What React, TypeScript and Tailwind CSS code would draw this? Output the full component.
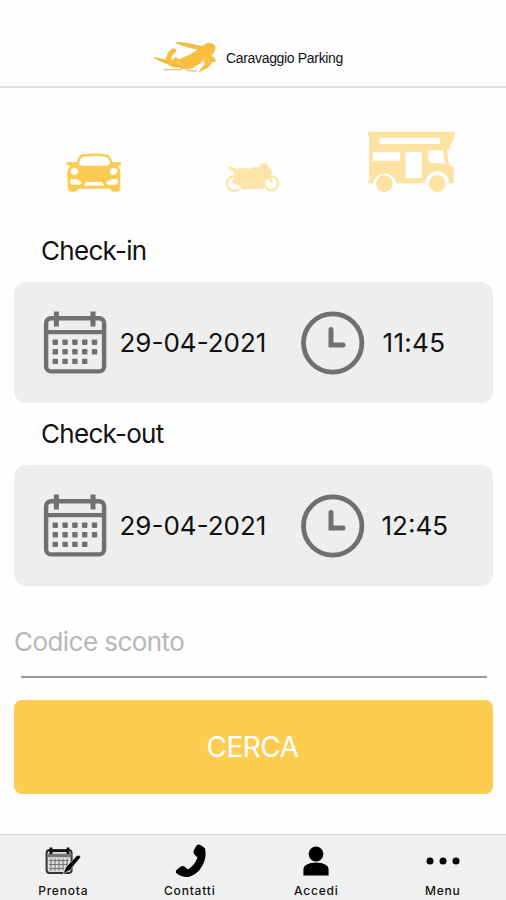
import { useState } from 'react'
import type { ReactNode } from 'react'

type Vehicle = 'car' | 'moto' | 'camper'

interface SlotProps {
    label: string
    date: string
    time: string
    labelClass: string
    timeClass: string
}

function Logo() {
    return (
        <svg viewBox="24 16 198 100" className="w-[66px] h-[33px]" fill="none">
            <path
                d="M94 25 C112 21 145 30 172 36 C184 24 203 22 210 34 C214 45 207 54 198 64 C204 65 210 72 213 80 L201 82 C198 94 188 100 177 105 L164 112 C168 102 176 96 181 89 L178 76 C166 89 153 93 139 101 C125 106 110 103 101 97 C89 101 77 97 68 88 C60 86 48 81 40 77 L27 70 L45 73 L63 77 C65 60 72 46 84 43 C95 41 96 51 84 59 C76 65 76 73 81 79 L91 69 L102 76 L112 71 C131 65 149 54 160 43 C140 42 116 34 94 25 Z"
                fill="#f8bd3e"
                stroke="#f3c050"
                strokeWidth="3"
                strokeLinejoin="round"
            />
            <path d="M92 24 C118 24 139 32 171 38 M27 69 C39 77 55 78 68 84 M91 88 L109 102" stroke="#e5b552" strokeWidth="2.6" strokeLinecap="round" />
            <path d="M58 106 L108 106 M125 108 L154 110" stroke="#dcc384" strokeWidth="4" strokeLinecap="round" />
            <path d="M92 85 L103 82 L109 91 M166 82 L179 76 M183 71 L193 76 L188 86" stroke="#fbe2a6" strokeWidth="2" />
        </svg>
    )
}

function CarIcon() {
    return (
        <svg viewBox="48 96 168 120" className="w-14 h-10" fill="#fccb52">
            <path
                fillRule="evenodd"
                d="M81 124 C84 109 88 102 97 100 Q133 95 169 100 C178 102 182 109 188 124 L211 123 Q215 124 213 131 L204 135 C211 142 212 153 211 164 L211 205 Q210 212 203 212 L188 212 Q182 211 181 203 L84 203 Q83 211 76 212 L61 212 Q54 211 54 204 L52 164 C51 152 53 143 61 136 L50 131 Q48 124 54 123 Z M87 129 Q92 134 98 134 L170 134 Q177 133 181 127 C177 113 175 109 165 107 Q133 103 101 107 C92 109 90 116 87 129 Z M73 140 a11 11 0 1 0 0.1 0 Z M191 140 a11 11 0 1 0 0.1 0 Z M61 174 Q59 190 66 191 L88 191 Q94 190 94 183 Q85 173 61 174 Z M203 174 Q205 190 198 191 L176 191 Q169 190 169 183 Q179 173 203 174 Z M108 183 L102 194 L163 194 L156 183 Z"
            />
        </svg>
    )
}

function MotoIcon() {
    return (
        <svg viewBox="34 36 163 93" className="w-[54px] h-[31px]">
            <path
                d="M38 54 L48 49 L64 56 L91 54 L103 57 Q111 51 122 52 L137 50 L139 41 L157 40 L161 51 L169 56 L174 69 L164 79 L151 92 L147 117 L82 118 L74 106 L50 98 L61 78 L56 66 Z"
                fill="#fde4a8"
            />
            <g fill="none" stroke="#fde4a8" strokeWidth="8">
                <path d="M74 117 A22 22 0 1 1 67 80" />
                <circle cx="170" cy="100" r="21" />
                <path d="M160 72 L173 98" />
            </g>
        </svg>
    )
}

function CamperIcon() {
    return (
        <svg viewBox="38 34 266 186" className="w-[89px] h-[62px] relative right-[2px]" fill="#fde2a1">
            <path
                fillRule="evenodd"
                d="M40 36 L302 36 L298 59 Q294 69 287 76 L286 88 L277 89 L283 132 Q286 139 298 143 L298 191 L284 191 A36 36 0 0 0 212 191 L126 191 A36 36 0 0 0 60 180 L55 191 L40 191 L40 185 L44 182 L44 48 L40 45 Z M75 54 V73 H257 V54 Z M55 98 V123 H137 V98 Z M153 96 V175 H202 V96 Z M222 92 V124 Q222 129 228 129 L272 132 L266 92 Z"
            />
            <circle cx="90" cy="192" r="25" />
            <circle cx="248" cy="192" r="25" />
        </svg>
    )
}

function CalendarIcon() {
    const rows = [
        { y: 28.5, xs: [9.6, 19.4, 29.2, 39, 48.8] },
        { y: 38.1, xs: [9.6, 19.4, 29.2, 39, 48.8] },
        { y: 47.7, xs: [9.6, 19.4, 29.2, 39] }
    ]
    return (
        <svg viewBox="0 0 64 64" className="w-16 h-16 shrink-0" fill="none" stroke="#707070">
            <rect x="3.1" y="7.2" width="58" height="53.2" rx="5" strokeWidth="4.4" />
            <path d="M3 21.2 H61" strokeWidth="4.2" />
            <path d="M13.4 0.5 V15.5 M50 0.5 V15.5" strokeWidth="5" />
            <g fill="#707070" stroke="none">
                {rows.map((row) => row.xs.map((x) => <rect key={`${row.y}-${x}`} x={x} y={row.y} width="5.4" height="5.4" rx="0.8" />))}
            </g>
        </svg>
    )
}

function ClockIcon() {
    return (
        <svg viewBox="0 0 64 64" className="w-16 h-16 shrink-0" fill="none" stroke="#707070">
            <circle cx="31.7" cy="32" r="29.2" strokeWidth="4.8" />
            <path d="M30 18.5 V34 H42" strokeWidth="5" strokeLinecap="round" />
        </svg>
    )
}

function PrenotaIcon() {
    return (
        <svg viewBox="0 0 36 28" className="w-9 h-7" fill="none" stroke="#333">
            <rect x="1.6" y="3" width="25" height="23" rx="3" strokeWidth="2" fill="#dcdcdc" />
            <path d="M2 8.5 H26.5" stroke="#777" strokeWidth="3.4" />
            <path d="M4 4 H24" stroke="#111" strokeWidth="2" />
            <path d="M6 0.5 V7 M23 0.5 V7" stroke="#111" strokeWidth="2.8" />
            <path d="M4 13.5 H24 M4 17.5 H23 M4 21.5 H19 M6 11.5 V24 M10 11.5 V24 M14 11.5 V24 M18 11.5 V23 M22 11.5 V19" stroke="#777" strokeWidth="1.1" />
            <path d="M18 27 L21 20 L32 8.5 Q35.5 7.5 35.5 10.5 L25 23 Z" fill="#000" stroke="#efefef" strokeWidth="0.6" />
        </svg>
    )
}

function PhoneIcon() {
    return (
        <svg viewBox="0 0 32 34" className="w-8 h-[34px] relative left-px" fill="#000">
            <path d="M21.5 1.6 Q23.5 0 25.5 1 L30 4.3 Q32 13 27.5 21.5 Q22.5 30.5 13.5 33 Q6.5 33.5 1.2 29 Q0.2 27.5 1.5 26 L5.8 22.6 Q8 21.3 10 23 L13 25.4 Q19.8 21.2 22.5 13.5 L19 10 Q17.8 8 19 6 Z" />
        </svg>
    )
}

function UserIcon() {
    return (
        <svg viewBox="0 0 26 30" className="w-[26px] h-[30px]" fill="#000">
            <circle cx="13" cy="8" r="7.4" />
            <path d="M0.4 29.5 V23 Q1 17 13 16.5 Q25 17 25.6 23 V29.5 Z" />
        </svg>
    )
}

function DotsIcon() {
    return (
        <svg viewBox="0 0 34 8" className="w-[34px] h-2" fill="#000">
            <circle cx="4" cy="4" r="3.5" />
            <circle cx="17" cy="4" r="3.5" />
            <circle cx="30" cy="4" r="3.5" />
        </svg>
    )
}

function Slot({ label, date, time, labelClass, timeClass }: SlotProps) {
    return (
        <section>
            <h2 className={`pl-[27px] pt-[15px] text-[26px] leading-8 tracking-[-0.7px] ${labelClass}`}>{label}</h2>
            <div className="h-[121px] rounded-xl bg-[#eeeeee] flex items-center pl-[29px]">
                <button className="flex w-[257.5px] items-center gap-[12.5px]">
                    <CalendarIcon />
                    <span className="text-[26px] whitespace-nowrap">{date}</span>
                </button>
                <button className="flex items-center">
                    <ClockIcon />
                    <span className={`text-[26px] whitespace-nowrap ${timeClass}`}>{time}</span>
                </button>
            </div>
        </section>
    )
}

const vehicles: { id: Vehicle; label: string; icon: ReactNode }[] = [
    { id: 'car', label: 'Auto', icon: <CarIcon /> },
    { id: 'moto', label: 'Moto', icon: <MotoIcon /> },
    { id: 'camper', label: 'Camper', icon: <CamperIcon /> }
]

const tabs: { label: string; icon: ReactNode }[] = [
    { label: 'Prenota', icon: <PrenotaIcon /> },
    { label: 'Contatti', icon: <PhoneIcon /> },
    { label: 'Accedi', icon: <UserIcon /> },
    { label: 'Menu', icon: <DotsIcon /> }
]

export default function App() {
    const [, setVehicle] = useState<Vehicle>('car')
    const [code, setCode] = useState('')

    return (
        <div className="w-full h-screen bg-[#fefefe] flex flex-col overflow-hidden text-[#111] font-['Inter',sans-serif]">
            <header className="h-[88px] shrink-0 border-b-2 border-[#dedede] flex justify-center items-start gap-[7px] pt-10 pr-[10px]">
                <Logo />
                <span className="pt-[9px] text-[14px] leading-[18px] font-['Liberation_Sans',sans-serif] tracking-[-0.33px]">Caravaggio Parking</span>
            </header>

            <main className="flex-1 px-[14px] pr-[13px]">
                <div className="h-[132px] pb-[27px] grid grid-cols-3 items-end justify-items-center">
                    {vehicles.map((v) => (
                        <button key={v.id} aria-label={v.label} onClick={() => setVehicle(v.id)}>
                            {v.icon}
                        </button>
                    ))}
                </div>

                <Slot label="Check-in" date="29-04-2021" time="11:45" labelClass="h-[62px]" timeClass="ml-[18px] tracking-[0.3px]" />
                <Slot label="Check-out" date="29-04-2021" time="12:45" labelClass="h-[62px]" timeClass="ml-[17px]" />

                <input
                    value={code}
                    onChange={(e) => setCode(e.target.value)}
                    placeholder="Codice sconto"
                    className="block w-full h-8 mt-[39px] text-[26px] tracking-[-0.55px] placeholder:text-[#b8b8b8] focus:outline-none"
                />
                <div className="mt-[19px] ml-[7px] mr-[6px] h-[2px] bg-[#999]" />
                <button className="mt-[22px] w-full h-[94px] rounded-lg bg-[#fdcd51] text-white text-[28px] tracking-[-0.5px] pr-[2px]">
                    CERCA
                </button>
            </main>

            <nav className="h-[66px] shrink-0 border-t border-[#d2d2d2] bg-[#f0f0f0] grid grid-cols-4">
                {tabs.map((tab) => (
                    <button key={tab.label} className="flex flex-col items-center pt-[8px]">
                        <span className="h-[36px] flex items-center">{tab.icon}</span>
                        <span className="mt-[4px] text-[12px] leading-4 font-medium tracking-[0.8px]">{tab.label}</span>
                    </button>
                ))}
            </nav>
        </div>
    )
}
